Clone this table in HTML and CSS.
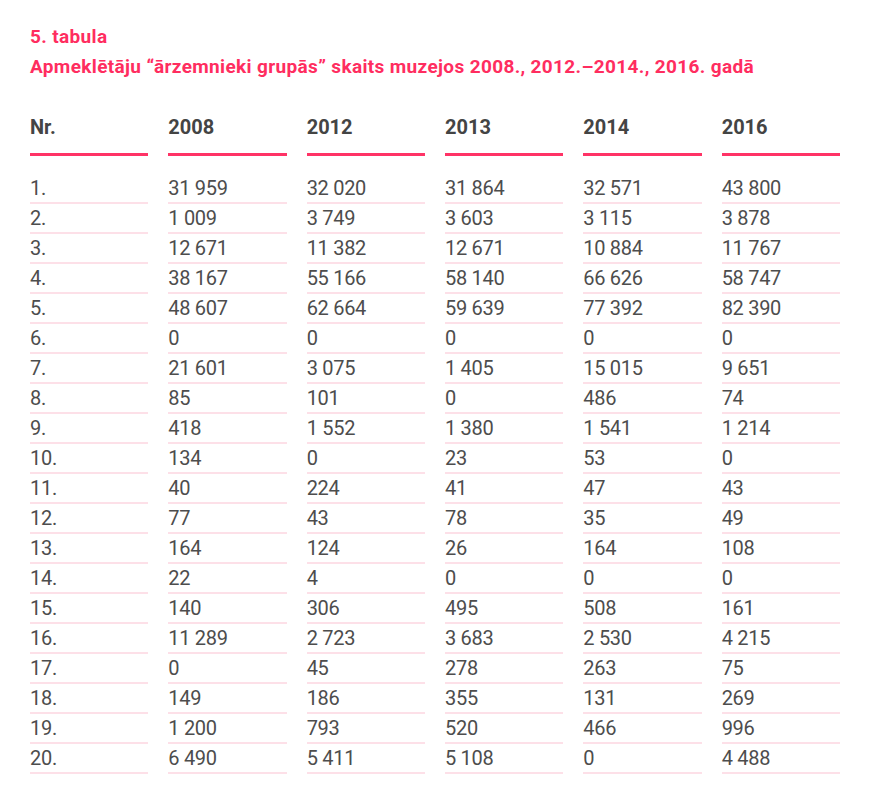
FILE: index.html
```html
<!DOCTYPE html>
<html lang="lv">
<head>
<meta charset="utf-8">
<title>5. tabula</title>
<link rel="stylesheet" href="styles.css">
</head>
<body>
<div class="page">
  <h1 class="caption">
    <span class="caption-num">5. tabula</span>
    <span class="caption-text">Apmeklētāju “ārzemnieki grupās” skaits muzejos 2008., 2012.–2014., 2016. gadā</span>
  </h1>
  <div class="table" role="table">
    <div class="th">Nr.</div><div class="th">2008</div><div class="th">2012</div><div class="th">2013</div><div class="th">2014</div><div class="th">2016</div>
    <div class="td">1.</div><div class="td">31 959</div><div class="td">32 020</div><div class="td">31 864</div><div class="td">32 571</div><div class="td">43 800</div>
    <div class="td">2.</div><div class="td">1 009</div><div class="td">3 749</div><div class="td">3 603</div><div class="td">3 115</div><div class="td">3 878</div>
    <div class="td">3.</div><div class="td">12 671</div><div class="td">11 382</div><div class="td">12 671</div><div class="td">10 884</div><div class="td">11 767</div>
    <div class="td">4.</div><div class="td">38 167</div><div class="td">55 166</div><div class="td">58 140</div><div class="td">66 626</div><div class="td">58 747</div>
    <div class="td">5.</div><div class="td">48 607</div><div class="td">62 664</div><div class="td">59 639</div><div class="td">77 392</div><div class="td">82 390</div>
    <div class="td">6.</div><div class="td">0</div><div class="td">0</div><div class="td">0</div><div class="td">0</div><div class="td">0</div>
    <div class="td">7.</div><div class="td">21 601</div><div class="td">3 075</div><div class="td">1 405</div><div class="td">15 015</div><div class="td">9 651</div>
    <div class="td">8.</div><div class="td">85</div><div class="td">101</div><div class="td">0</div><div class="td">486</div><div class="td">74</div>
    <div class="td">9.</div><div class="td">418</div><div class="td">1 552</div><div class="td">1 380</div><div class="td">1 541</div><div class="td">1 214</div>
    <div class="td">10.</div><div class="td">134</div><div class="td">0</div><div class="td">23</div><div class="td">53</div><div class="td">0</div>
    <div class="td">11.</div><div class="td">40</div><div class="td">224</div><div class="td">41</div><div class="td">47</div><div class="td">43</div>
    <div class="td">12.</div><div class="td">77</div><div class="td">43</div><div class="td">78</div><div class="td">35</div><div class="td">49</div>
    <div class="td">13.</div><div class="td">164</div><div class="td">124</div><div class="td">26</div><div class="td">164</div><div class="td">108</div>
    <div class="td">14.</div><div class="td">22</div><div class="td">4</div><div class="td">0</div><div class="td">0</div><div class="td">0</div>
    <div class="td">15.</div><div class="td">140</div><div class="td">306</div><div class="td">495</div><div class="td">508</div><div class="td">161</div>
    <div class="td">16.</div><div class="td">11 289</div><div class="td">2 723</div><div class="td">3 683</div><div class="td">2 530</div><div class="td">4 215</div>
    <div class="td">17.</div><div class="td">0</div><div class="td">45</div><div class="td">278</div><div class="td">263</div><div class="td">75</div>
    <div class="td">18.</div><div class="td">149</div><div class="td">186</div><div class="td">355</div><div class="td">131</div><div class="td">269</div>
    <div class="td">19.</div><div class="td">1 200</div><div class="td">793</div><div class="td">520</div><div class="td">466</div><div class="td">996</div>
    <div class="td">20.</div><div class="td">6 490</div><div class="td">5 411</div><div class="td">5 108</div><div class="td">0</div><div class="td">4 488</div>
  </div>
</div>
</body>
</html>
```

FILE: styles.css
```css
html, body {
  margin: 0;
  padding: 0;
  background: #ffffff;
}

.page {
  padding: 22px 30px 0 30px;
  font-family: Roboto, "Liberation Sans", sans-serif;
  color: #4a4a4a;
}

.caption {
  margin: 0;
  font-size: 19px;
  line-height: 30px;
  font-weight: 700;
  letter-spacing: 0.35px;
  color: #ff2d5f;
}

.caption-num,
.caption-text {
  display: block;
}

.table {
  display: grid;
  grid-template-columns: repeat(6, 1fr);
  column-gap: 20px;
  width: 810px;
  margin-top: 33px;
}

.th {
  font-size: 20px;
  line-height: 24px;
  font-weight: 700;
  color: #444444;
  padding-bottom: 14px;
  border-bottom: 3px solid #ff3366;
  margin-bottom: 18px;
}

.td {
  font-size: 20px;
  line-height: 28px;
  font-weight: 400;
  color: #4d4d4d;
  border-bottom: 2px solid #fde0e8;
  letter-spacing: -0.3px;
}
```
